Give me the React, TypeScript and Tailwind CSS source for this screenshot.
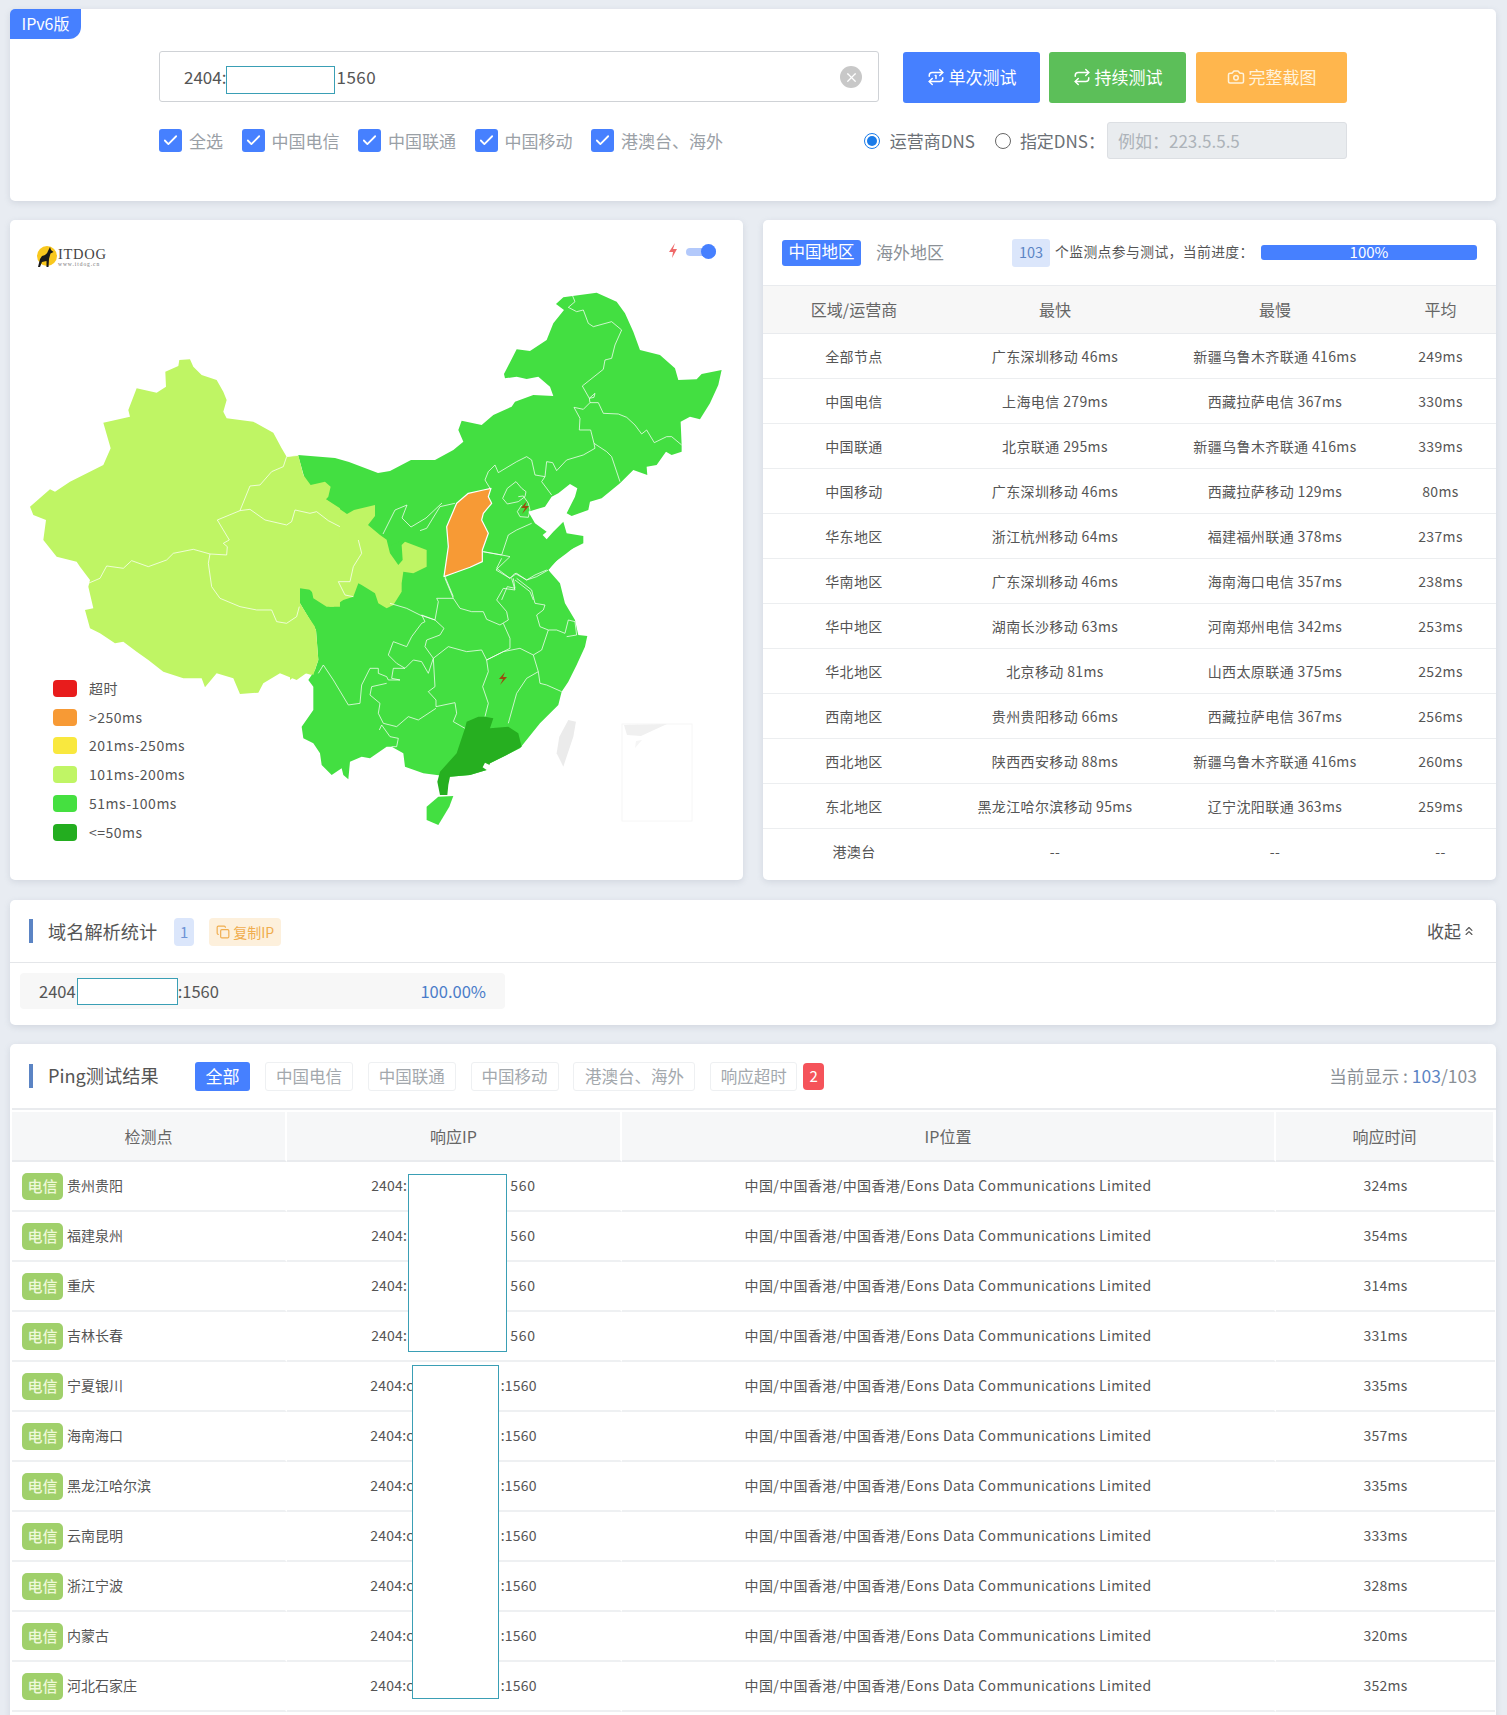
import React from "react";
import { Repeat, Repeat1, Camera, Check, X, Copy, ChevronsUp } from "lucide-react";

const G = "#43df41";
const L = "#bff564";

/* crop 1: west */
const C1_LIGHT = "478,30 510,28 520,50 545,75 590,90 610,125 620,150 610,185 620,205 700,215 760,248 785,295 800,320 835,316 850,375 872,405 915,395 932,410 925,440 918,448 960,475 960,770 930,770 905,755 870,720 860,705 840,710 838,760 885,830 893,935 880,975 865,965 830,990 780,970 730,1000 715,1028 660,1032 640,985 590,970 555,1012 545,985 490,985 430,965 385,930 350,905 310,875 285,880 240,850 210,835 195,780 220,775 205,710 210,690 180,650 170,635 110,620 70,570 78,510 40,495 30,470 90,418 105,425 150,395 250,345 272,295 250,218 330,200 325,180 350,115 410,128 438,110 436,65 475,48";
const C1_LINES = [
  "205,700 240,685 260,648 310,655 335,632 385,650 440,630 460,610 520,598 570,612 620,615 622,590 610,580 628,570 610,540 592,510 660,482",
  "660,482 690,408 720,405 755,365 790,350 800,320 835,316",
  "660,482 690,478 735,510 800,525 815,515 825,480 870,490 890,485 925,512 960,530",
  "570,612 565,640 575,710 600,745 660,770 710,780 755,780 770,815 800,820 830,800 838,770",
];

/* crop 2: north-east */
const C2_MAIN = "0,540 45,540 100,510 130,485 115,450 125,422 185,435 220,405 275,380 285,365 340,345 400,348 390,320 355,290 320,297 290,290 255,295 252,282 290,208 330,213 380,180 400,130 432,90 408,72 430,52 530,38 590,65 615,100 640,155 660,210 720,225 765,265 775,300 830,298 845,282 905,270 895,315 870,370 840,418 810,410 782,425 785,495 785,515 755,525 738,515 710,555 680,560 682,585 640,570 600,610 545,655 510,665 505,690 455,708 440,700 465,650 472,625 450,612 415,640 395,650 375,680 325,695 345,730 380,755 368,765 380,778 400,755 430,725 440,760 490,768 490,790 430,820 385,870 405,905 430,960 0,960";
const C2_LINES = [
  "458,48 465,65 445,82 470,95 490,90 505,130 520,140 575,125 605,150 585,195 575,235 555,240 550,268 487,318 508,355 525,340 522,352 508,355 510,368",
  "510,368 535,368 550,400 595,402 620,412 645,435 665,462 680,450 703,488 740,470 755,470 785,495",
  "510,368 490,388 462,382 480,415 478,450 512,450 522,490",
  "522,490 525,505 490,525 440,540 410,572 398,548 380,545 375,590 365,605 395,645",
  "522,490 560,515 575,530 600,605",
  "375,590 345,585 335,540 320,530 290,545 235,578 225,555 205,575 195,600 210,625",
  "262,625 288,605 305,625 318,635 315,650 295,665 262,672 248,655 262,625",
  "295,650 310,648 325,670 330,690 325,712 300,710 292,695 305,675",
  "335,730 290,750 265,765 245,825 190,815",
  "245,825 270,830 228,870 270,895 285,880 320,900 345,885 380,870",
  "0,752 20,745 60,680 105,670",
  "75,890 100,950",
  "245,960 262,920 285,925 280,895",
  "285,900 330,935 340,960",
];
const SHANXI = "213,625 205,650 215,670 190,700 185,720 205,760 187,810 187,845 150,862 100,880 72,890 85,800 80,740 110,670 145,640 190,630";

/* crop 3: south */
const C3_MAIN = "30,190 30,145 100,100 200,60 340,0 880,0 830,40 790,70 775,90 810,130 825,190 855,240 865,285 892,288 885,320 860,375 835,425 815,455 805,495 750,550 700,612 690,625 650,645 600,670 590,690 540,705 480,710 440,705 400,700 345,680 340,640 305,620 290,620 240,655 215,650 180,665 175,718 160,705 155,685 125,705 95,675 90,640 70,610 40,595 35,560 70,510 70,440 55,420 75,390 85,360 78,270 60,240";
const C3_LIGHT = "0,0 290,0 300,40 325,75 338,60 335,15 345,5 410,30 410,80 370,100 340,95 335,130 335,155 310,195 290,205 265,190 255,160 215,135 205,130 190,170 160,180 130,200 110,200 70,175 65,150 30,145 30,190 60,240 78,270 85,360 65,405 30,395 0,420";
const C3_LIGHT_LINES = ["205,0 215,40 190,80 180,125 145,125 165,165 190,170"];
const C3_LINES = [
  "300,190 350,205 390,225 435,240",
  "465,115 490,175 510,205 545,215 580,215 590,238 630,255 655,240",
  "655,240 650,215 620,180 640,145 675,150 665,115",
  "635,55 620,85 660,115 680,100 710,120 740,110 775,90",
  "578,35 635,45",
  "680,115 725,150 735,190 765,195 760,210 740,225 750,260 775,270",
  "775,270 800,270 825,280 835,240 855,245 860,285 830,290",
  "775,270 755,330 730,345",
  "640,250 660,295 660,325 590,360",
  "435,240 445,185 440,175 490,175",
  "435,240 395,225 405,245 395,250 365,290 350,320 310,305 295,345 320,370 345,385 370,360 395,365 415,400 430,355 405,320 410,300 450,285 462,265 435,240",
  "430,355 475,320 530,335 575,330 590,360 640,335 690,325 730,345",
  "590,360 595,395 578,440 595,490 585,530",
  "430,355 435,440 415,455 438,480 438,500 495,488 500,520 490,545 525,565",
  "345,385 310,385 305,415 330,420 295,420 290,410 265,400 265,385 240,385 215,435 210,490 175,495 130,420 100,375 85,400",
  "290,430 245,440 240,465 270,490 265,520 280,550 320,560 355,530 385,540 438,505",
  "268,570 275,555 300,590 325,595 320,620 305,620",
  "730,345 745,395 710,415 680,460 655,550",
  "745,395 750,430 770,435 815,455",
];
const GUANGDONG = "525,565 530,545 565,530 585,530 610,535 600,565 655,560 685,580 695,620 650,645 600,670 590,690 540,705 480,710 475,735 472,765 450,765 442,725 450,695 500,640";
const HAINAN = "445,770 490,768 478,800 445,855 410,840 410,800";
const TAIWAN = "835,540 858,545 850,590 820,680 800,640 808,590";

const line = { fill: "none", stroke: "#ffffff", strokeOpacity: 0.72, strokeWidth: 1, vectorEffect: "non-scaling-stroke", strokeLinejoin: "round" } as const;

function ChinaMap() {
  const c1 = "translate(20 350) scale(0.3333)";
  const c2 = "translate(420 280) scale(0.3333)";
  const c3 = "translate(290 540) scale(0.3333)";
  return (
    <svg viewBox="10 220 733 660" className="block w-full h-full">
      <polygon points="298,455 335,458 349,462 378,473 390,471 411,460 425,460 425,600 340,560 320,520 305,480" fill={G} />
      <polygon transform={c2} points={C2_MAIN} fill={G} />
      <polygon transform={c3} points={C3_MAIN} fill={G} />
      <polygon points="325,499 347,514 354,510 375,505 375,516 368,525 380,535 387,540 340,560 320,540" fill={L} />
      <polygon transform={c1} points={C1_LIGHT} fill={L} />
      <polygon transform={c3} points={C3_LIGHT} fill={L} />
      <g transform={c1}>{C1_LINES.map((p) => <polyline key={p} points={p} {...line} />)}</g>
      <g transform={c2}>{C2_LINES.map((p) => <polyline key={p} points={p} {...line} />)}</g>
      <g transform={c3}>{C3_LIGHT_LINES.concat(C3_LINES).map((p) => <polyline key={p} points={p} {...line} />)}</g>
      <polyline points="442,503 426,518 411,527 402,518 407,505 395,510 383,534" {...line} />
      <polygon transform={c2} points={SHANXI} fill="#f79a35" stroke="#fff" strokeWidth="1.2" vectorEffect="non-scaling-stroke" strokeLinejoin="round" />
      <polygon transform={c3} points={GUANGDONG} fill="#26af20" />
      <polygon transform={c3} points="585,668 605,678 590,690 578,682" fill="#ffffff" />
      <polygon transform={c3} points={HAINAN} fill={G} />
      <polygon transform={c3} points={TAIWAN} fill="#ebebeb" />
      <rect x="622" y="724" width="70" height="97" fill="none" stroke="#f6f6f6" strokeWidth="1" />
      <polygon points="624,725 667,724 641,736 627,735" fill="#f0f0f0" />
      <polygon points="636,741 642,740 635,748" fill="#f5f5f5" />
      <polygon points="527,501 521,508 525,508 522,514 529,506 525,506" fill="#9a4b10" />
      <polygon points="505,672 499,679 503,679 500,685 507,677 503,677" fill="#9a4b10" />
      <polygon points="675,243 669,252 673,252 672,258 677,249 673,249" fill="#ef6a6a" />
    </svg>
  );
}

function Logo() {
  return (
    <div className="absolute left-[26px] top-[26px] flex items-center gap-[1px]">
      <svg viewBox="0 0 21 22" className="w-[21px] h-[22px]">
        <circle cx="11" cy="10" r="10" fill="#f9c81e" />
        <path d="M14 1 L15 4 L17.5 6 L14.5 7.5 L13 13 L12.5 21 L10.5 21 L10.5 15 L6 16 L4 21 L2 21 L4 13 L6 10 Q11 9 12 5 Z" fill="#1a1a1a" />
      </svg>
      <div className="flex flex-col leading-none font-['Liberation_Serif',serif]">
        <span className="text-[14.5px] leading-[13px] tracking-[0.7px] text-[#444]">ITDOG</span>
        <span className="text-[5.5px] leading-[6px] tracking-[0.95px] text-[#777]">www.itdog.cn</span>
      </div>
    </div>
  );
}

const LEGEND: [string, string][] = [
  ["#e81c1c", "超时"],
  ["#f79a35", ">250ms"],
  ["#f9e83e", "201ms-250ms"],
  ["#c0f565", "101ms-200ms"],
  ["#45e040", "51ms-100ms"],
  ["#23ad1f", "<=50ms"],
];

const REGIONS = [
  ["全部节点", "广东深圳移动 46ms", "新疆乌鲁木齐联通 416ms", "249ms"],
  ["中国电信", "上海电信 279ms", "西藏拉萨电信 367ms", "330ms"],
  ["中国联通", "北京联通 295ms", "新疆乌鲁木齐联通 416ms", "339ms"],
  ["中国移动", "广东深圳移动 46ms", "西藏拉萨移动 129ms", "80ms"],
  ["华东地区", "浙江杭州移动 64ms", "福建福州联通 378ms", "237ms"],
  ["华南地区", "广东深圳移动 46ms", "海南海口电信 357ms", "238ms"],
  ["华中地区", "湖南长沙移动 63ms", "河南郑州电信 342ms", "253ms"],
  ["华北地区", "北京移动 81ms", "山西太原联通 375ms", "252ms"],
  ["西南地区", "贵州贵阳移动 66ms", "西藏拉萨电信 367ms", "256ms"],
  ["西北地区", "陕西西安移动 88ms", "新疆乌鲁木齐联通 416ms", "260ms"],
  ["东北地区", "黑龙江哈尔滨移动 95ms", "辽宁沈阳联通 363ms", "259ms"],
  ["港澳台", "--", "--", "--"],
];

const PINGS: [string, string][] = [
  ["贵州贵阳", "324ms"],
  ["福建泉州", "354ms"],
  ["重庆", "314ms"],
  ["吉林长春", "331ms"],
  ["宁夏银川", "335ms"],
  ["海南海口", "357ms"],
  ["黑龙江哈尔滨", "335ms"],
  ["云南昆明", "333ms"],
  ["浙江宁波", "328ms"],
  ["内蒙古", "320ms"],
  ["河北石家庄", "352ms"],
];

function CheckItem({ label }: { label: string }) {
  return (
    <div className="flex items-center gap-[7px]">
      <span className="flex items-center justify-center w-[23px] h-[23px] rounded-[3px] bg-[#4680ff]">
        <Check size={17} color="#fff" strokeWidth={2.5} />
      </span>
      <span className="text-[17px] text-[#9aa0a6] whitespace-nowrap">{label}</span>
    </div>
  );
}

function Redact({ className }: { className: string }) {
  return <div className={"absolute bg-white border border-[#3a9fb5] " + className} />;
}

function FilterTag({ label, w }: { label: string; w: string }) {
  return (
    <span className={"flex items-center justify-center h-[29px] rounded-[3px] border border-[#eef0f2] text-[16.5px] text-[#a3a8ad] whitespace-nowrap " + w}>
      {label}
    </span>
  );
}

export default function App() {
  return (
    <div className="h-[1715px] overflow-hidden bg-[#e8ecf2] pt-[9px] pl-[10px] pr-[11px] font-['Noto_Sans_CJK_SC','Noto_Sans',sans-serif] text-[#555]">
      {/* Search card */}
      <div className="relative h-[192px] bg-white rounded-[5px] shadow-[0_2px_6px_rgba(120,130,150,0.2)] pt-[42px] pl-[149px] pr-[149px]">
        <div className="absolute left-0 top-0 w-[71px] h-[30px] pb-[2px] bg-[#4680ff] rounded-tl-[5px] rounded-br-[12px] text-white text-[16px] flex items-center justify-center">
          IPv6版
        </div>
        <div className="flex items-start">
          <div className="relative w-[720px] h-[51px] rounded-[3px] border border-[#cfd2d6] flex items-center pl-[24px] text-[17px] text-[#555]">
            <span>2404:</span>
            <span className="inline-block w-[109px] h-[28px] mt-[6px] bg-white border border-[#3a9fb5]" />
            <span className="ml-[1px] tracking-[0.5px]">1560</span>
            <span className="absolute right-[16px] top-[14px] w-[22px] h-[22px] rounded-full bg-[#c8c8c8] flex items-center justify-center">
              <X size={15} color="#fff" strokeWidth={2} />
            </span>
          </div>
          <div className="flex ml-[24px] mt-[1px] text-[17px]">
            <button className="flex items-center justify-center gap-[4px] w-[137px] h-[51px] pb-[2px] rounded-[3px] bg-[#4680ff] text-white">
              <Repeat1 size={18} />
              单次测试
            </button>
            <button className="flex items-center justify-center gap-[4px] w-[137px] h-[51px] pb-[2px] ml-[9px] rounded-[3px] bg-[#5cbf59] text-white">
              <Repeat size={18} />
              持续测试
            </button>
            <button className="flex items-center justify-center gap-[4px] w-[151px] h-[51px] pb-[2px] ml-[10px] rounded-[3px] bg-[#ffb64d] text-[#fff3dc]">
              <Camera size={18} />
              完整截图
            </button>
          </div>
        </div>
        <div className="flex items-center justify-between h-[37px] mt-[19px]">
          <div className="flex items-center gap-[18.5px]">
            <CheckItem label="全选" />
            <CheckItem label="中国电信" />
            <CheckItem label="中国联通" />
            <CheckItem label="中国移动" />
            <CheckItem label="港澳台、海外" />
          </div>
          <div className="flex items-center">
            <span className="w-[16px] h-[16px] rounded-full border border-[#1a7be8] flex items-center justify-center">
              <span className="w-[10px] h-[10px] rounded-full bg-[#1a7be8]" />
            </span>
            <span className="ml-[10px] text-[17px] text-[#6b7076]">运营商DNS</span>
            <span className="ml-[20px] w-[16px] h-[16px] rounded-full border border-[#666]" />
            <span className="ml-[9px] mr-[2px] text-[17px] text-[#6b7076]">指定DNS：</span>
            <div className="w-[240px] h-[37px] rounded-[3px] bg-[#e9ecef] border border-[#dcdfe3] flex items-center pl-[10px] text-[17px] text-[#adb3b9]">
              例如：223.5.5.5
            </div>
          </div>
        </div>
      </div>

      {/* Map + stats */}
      <div className="grid grid-cols-2 gap-[20px] mt-[19px] h-[660px]">
        <div className="relative bg-white rounded-[5px] shadow-[0_2px_6px_rgba(120,130,150,0.2)] overflow-hidden">
          <ChinaMap />
          <Logo />
          <div className="absolute right-[27px] top-[24px] w-[30px] h-[15px] flex items-center">
            <div className="w-full h-[8px] rounded-full bg-[#b3c9fb]" />
            <div className="absolute right-0 top-0 w-[15px] h-[15px] rounded-full bg-[#4680ff]" />
          </div>
          <div className="absolute left-[43px] top-[454px] flex flex-col">
            {LEGEND.map(([c, t]) => (
              <div key={t} className="flex items-center h-[28.8px] gap-[12px]">
                <span className="w-[24px] h-[17px] rounded-[4px]" style={{ backgroundColor: c }} />
                <span className="text-[14px] text-[#555] tracking-[0.5px]">{t}</span>
              </div>
            ))}
          </div>
        </div>

        <div className="bg-white rounded-[5px] shadow-[0_2px_6px_rgba(120,130,150,0.2)] overflow-hidden">
          <div className="flex items-center h-[65px] pl-[19px] pr-[19px]">
            <span className="flex items-center justify-center w-[79px] h-[26px] pb-[2px] rounded-[3px] bg-[#4680ff] text-white text-[16.5px]">中国地区</span>
            <span className="ml-[15px] mb-[2px] text-[17px] text-[#8a9096]">海外地区</span>
            <span className="ml-[68px] flex items-center justify-center w-[38px] h-[28px] pb-[2px] rounded-[3px] bg-[#dbe6fb] text-[#5b84c4] text-[14.5px]">103</span>
            <span className="ml-[5px] mb-[2px] text-[13.8px] tracking-[0.4px] text-[#555] whitespace-nowrap">个监测点参与测试，当前进度：</span>
            <div className="ml-auto w-[216px] h-[15px] rounded-[3px] bg-[#4680ff] text-white text-[15px] leading-[13px] text-center">100%</div>
          </div>
          <div className="grid grid-cols-[182px_220px_220px_111px] h-[49px] pb-[2px] items-center bg-[#f7f7f7] border-t border-b border-[#e9ebee] text-[16px] text-[#666] text-center">
            <span>区域/运营商</span>
            <span>最快</span>
            <span>最慢</span>
            <span>平均</span>
          </div>
          {REGIONS.map((r) => (
            <div key={r[0]} className="grid grid-cols-[182px_220px_220px_111px] h-[45px] items-center border-b border-[#eceef0] last:border-b-0 text-[14px] tracking-[0.38px] text-[#555] text-center">
              {r.map((c, i) => (
                <span key={i} className="whitespace-nowrap">{c}</span>
              ))}
            </div>
          ))}
        </div>
      </div>

      {/* Resolve stats */}
      <div className="relative h-[125px] mt-[20px] bg-white rounded-[5px] shadow-[0_2px_6px_rgba(120,130,150,0.2)]">
        <div className="flex items-center h-[63px] pt-[2px] border-b border-[#e4e6e9] pl-[19px] pr-[20px]">
          <span className="w-[4px] h-[24px] mb-[2px] bg-[#5b84c4]" />
          <span className="ml-[15px] text-[18.2px] text-[#555]">域名解析统计</span>
          <span className="ml-[17px] flex items-center justify-center w-[20px] h-[28px] rounded-[4px] bg-[#dbe6fb] text-[#6d93d6] text-[15px]">1</span>
          <span className="ml-[15px] flex items-center justify-center gap-[3px] w-[72px] h-[28px] rounded-[4px] bg-[#fdf0dc] text-[#f0ad4e] text-[14px] whitespace-nowrap">
            <Copy size={14} />
            复制IP
          </span>
          <span className="ml-auto mb-[2px] flex items-center text-[17px] text-[#555] gap-[1px]">
            收起
            <ChevronsUp size={14} />
          </span>
        </div>
        <div className="relative flex items-center justify-between w-[485px] h-[36px] ml-[10px] mt-[10px] rounded-[4px] bg-[#f7f7f7] pl-[19px] pr-[19px] text-[16.5px]">
          <span className="flex items-center">
            2404
            <span className="w-[101px] h-[27px] ml-[1px] bg-white border border-[#3a9fb5]" />
            :1560
          </span>
          <span className="text-[#4a7cc9]">100.00%</span>
        </div>
      </div>

      {/* Ping results */}
      <div className="relative mt-[19px] h-[700px] bg-white rounded-t-[5px] shadow-[0_2px_6px_rgba(120,130,150,0.2)]">
        <div className="flex items-center h-[64px] pl-[19px] pr-[19px]">
          <span className="w-[4px] h-[24px] bg-[#5b84c4]" />
          <span className="ml-[15px] w-[147px] text-[18.2px] text-[#555]">Ping测试结果</span>
          <span className="flex items-center justify-center w-[55px] h-[29px] rounded-[3px] bg-[#4680ff] text-white text-[17px]">全部</span>
          <div className="flex items-center gap-[14.8px] ml-[15px]">
            <FilterTag label="中国电信" w="w-[88px]" />
            <FilterTag label="中国联通" w="w-[88px]" />
            <FilterTag label="中国移动" w="w-[88px]" />
            <FilterTag label="港澳台、海外" w="w-[122px]" />
            <FilterTag label="响应超时" w="w-[87px]" />
          </div>
          <span className="ml-[6px] flex items-center justify-center w-[21px] h-[27px] rounded-[4px] bg-[#f5535a] text-white text-[15px]">2</span>
          <span className="ml-auto text-[17.5px] text-[#8a9096] whitespace-nowrap">
            当前显示 : <span className="text-[#5b84c4]">103</span>/103
          </span>
        </div>
        <div className="relative ml-[2px] border-t-2 border-[#e9ebee] pt-[2px] text-center">
          <div className="grid grid-cols-[275px_335px_654px_219px] h-[50px] text-[16px] text-[#666]">
            {["检测点", "响应IP", "IP位置", "响应时间"].map((h) => (
              <div key={h} className="flex items-center justify-center pb-[1px] bg-[#f6f7f8] border-r-2 border-b-2 border-r-white border-b-[#e9ebee]">{h}</div>
            ))}
          </div>
          {PINGS.map(([name, t], i) => (
            <div key={name} className="grid grid-cols-[275px_335px_654px_219px] h-[50px] text-[14px] text-[#555]">
              <div className="flex items-center pl-[10px] gap-[4px] border-r-2 border-b-2 border-r-white border-b-[#eef0f2]">
                <span className="flex items-center justify-center w-[41px] h-[27px] rounded-[5px] bg-[#a0d06b] text-[#eef8d8] text-[15px] font-medium">电信</span>
                <span className="mb-[2px]">{name}</span>
              </div>
              <div className="flex items-center justify-center pb-[2px] border-r-2 border-b-2 border-r-white border-b-[#eef0f2] tracking-[0.2px]">
                {i < 4 ? (
                  <>
                    <span>2404:</span>
                    <span className="inline-block w-[103px]" />
                    <span className="tracking-[0.8px]">560</span>
                  </>
                ) : (
                  <>
                    <span>2404:c</span>
                    <span className="inline-block w-[87px]" />
                    <span>:1560</span>
                  </>
                )}
              </div>
              <div className="flex items-center justify-center pb-[2px] border-r-2 border-b-2 border-r-white border-b-[#eef0f2] tracking-[0.4px]">
                中国/中国香港/中国香港/Eons Data Communications Limited
              </div>
              <div className="flex items-center justify-center pb-[2px] border-b-2 border-b-[#eef0f2] tracking-[0.25px]">{t}</div>
            </div>
          ))}
          <Redact className="left-[396px] top-[64px] w-[99px] h-[178px]" />
          <Redact className="left-[400px] top-[255px] w-[87px] h-[334px]" />
        </div>
      </div>
    </div>
  );
}
